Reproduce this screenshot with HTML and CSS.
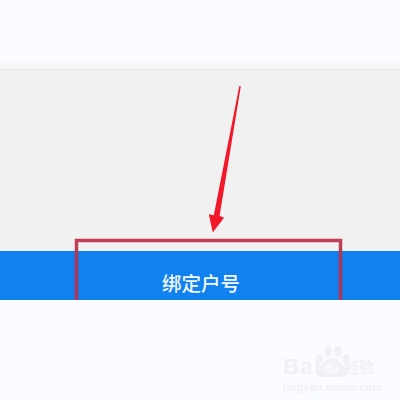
FILE: index.html
```html
<!DOCTYPE html>
<html lang="zh">
<head>
<meta charset="utf-8">
<title>绑定户号</title>
<link rel="stylesheet" href="styles.css">
</head>
<body>
<div class="page">
  <header class="top"></header>
  <main class="content"></main>
  <div class="action"><span class="action-label">绑定户号</span></div>
  <footer class="bottom"></footer>

  <svg class="annotation" width="400" height="400" viewBox="0 0 400 400">
    <rect class="frame" x="76.5" y="240.5" width="264" height="80"/>
    <path class="arrow" d="M239.3 86 L240.8 86.3 L219.6 215.8 L224 217.8 L212.8 232.5 L208.8 214.2 L213.8 215.2 Z"/>
  </svg>

  <div class="mark">
    <svg class="paw" width="58" height="34" viewBox="0 0 58 34">
      <ellipse cx="6" cy="14" rx="3.5" ry="5"/>
      <ellipse cx="15" cy="6" rx="4" ry="6"/>
      <ellipse cx="25" cy="6" rx="4" ry="5.5"/>
      <ellipse cx="33" cy="14" rx="3.5" ry="5"/>
      <path d="M19 13 C26 13 27 18 32 22 C37 27 33 33 27 32 L11 32 C4 33 1 27 6 22 C11 18 12 13 19 13 Z"/>
    </svg>
    <div class="mark-row">
      <span class="mark-bai">Bai</span>
      <span class="mark-du">du</span>
      <span class="mark-jy">经验</span>
    </div>
    <div class="mark-url">jingyan.baidu.com</div>
  </div>
</div>
</body>
</html>
```
FILE: styles.css
```css
html, body {
  margin: 0;
  padding: 0;
}

body {
  width: 400px;
  height: 400px;
  overflow: hidden;
  background: #fbfcff;
  font-family: "Liberation Sans", "Noto Sans CJK SC", sans-serif;
}

.page {
  position: relative;
  display: flex;
  flex-direction: column;
  width: 400px;
  height: 400px;
  overflow: hidden;
}

.top {
  height: 69px;
  flex: none;
  background: linear-gradient(#fbfcff 0, #fbfcff 58px, #f5f6f8 68px);
  border-bottom: 1px solid #e4e5e5;
}

.content {
  height: 181px;
  flex: none;
  background: #f1f1f1;
}

.action {
  height: 49px;
  flex: none;
  display: flex;
  justify-content: center;
  padding: 20px 0 0 2px;
  box-sizing: border-box;
  background: #1181ef;
}

.action-label {
  color: #f2f8ff;
  font-family: "Noto Sans CJK SC", sans-serif;
  font-size: 19.5px;
  font-weight: 500;
  line-height: 24px;
}

.bottom {
  flex: 1;
  background: #fbfcff;
}

.annotation {
  position: absolute;
  left: 0;
  top: 0;
  clip-path: inset(0 0 100px 0);
}

.frame {
  fill: none;
  stroke: #bb3048;
  stroke-opacity: 0.92;
  stroke-width: 3.5;
}

.arrow {
  fill: #f2182a;
}

.mark {
  position: absolute;
  left: 283px;
  top: 345px;
  width: 104px;
  color: #f0f1f4;
}

.paw {
  position: absolute;
  left: 30px;
  top: 0;
  fill: #f1f2f5;
}

.mark-row {
  display: flex;
  align-items: center;
  height: 24px;
  margin-top: 10px;
  position: relative;
}

.mark-bai {
  font-size: 22px;
  font-weight: 700;
  line-height: 24px;
  width: 37px;
  letter-spacing: 1.5px;
}

.mark-du {
  width: 23px;
  margin-top: 4px;
  font-size: 12px;
  font-weight: 700;
  line-height: 14px;
  text-align: center;
  color: #fbfcff;
}

.mark-jy {
  margin-left: 1px;
  font-family: "Noto Sans CJK SC", sans-serif;
  font-size: 15px;
  font-weight: 700;
  line-height: 24px;
}

.mark-url {
  font-size: 10.5px;
  font-weight: 700;
  line-height: 13px;
  margin-top: 2px;
  white-space: nowrap;
  letter-spacing: 0.4px;
}
```
